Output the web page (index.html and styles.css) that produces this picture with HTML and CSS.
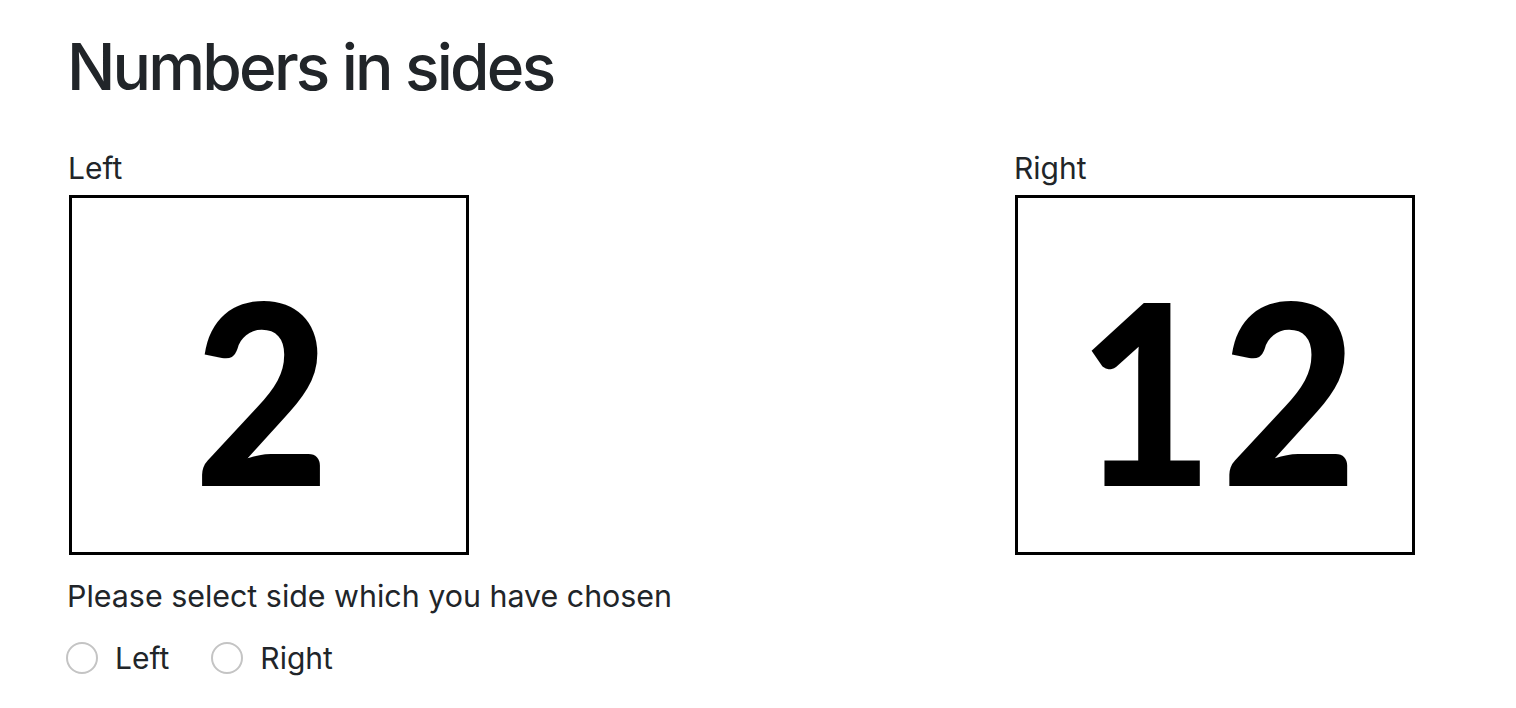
FILE: index.html
```html
<!DOCTYPE html>
<html>
<head>
<meta charset="utf-8">
<link rel="stylesheet" href="styles.css">
</head>
<body>
<main class="page">
  <h1 class="title">Numbers in sides</h1>
  <div class="sides">
    <div class="side">
      <div class="side-label">Left</div>
      <div class="card"><span class="num num-left">2</span></div>
    </div>
    <div class="side">
      <div class="side-label">Right</div>
      <div class="card"><span class="num num-right">12</span></div>
    </div>
  </div>
  <p class="prompt">Please select side which you have chosen</p>
  <div class="choices">
    <label class="choice"><input type="radio" name="side" class="radio"><span>Left</span></label>
    <label class="choice"><input type="radio" name="side" class="radio"><span>Right</span></label>
  </div>
</main>
</body>
</html>
```

FILE: styles.css
```css
html, body {
  margin: 0;
  padding: 0;
  background: #fff;
}
body {
  font-family: Inter, "Liberation Sans", sans-serif;
  color: #212529;
}
.page {
  padding: 29px 0 0 67px;
}
.title {
  margin: 0;
  font-size: 64px;
  font-weight: 500;
  line-height: 1.2;
  letter-spacing: -2.8px;
}
.sides {
  display: grid;
  grid-template-columns: 946px 402px;
  margin-top: 44px;
}
.side-label {
  font-size: 30px;
  line-height: 36px;
  padding-left: 1px;
}
.card {
  box-sizing: border-box;
  width: 400px;
  height: 360px;
  margin: 9px 0 0 2px;
  border: 3px solid #000;
  display: flex;
  align-items: center;
  justify-content: center;
  background: #fff;
}
.num {
  font-family: Lato, "Open Sans", sans-serif;
  font-weight: 900;
  font-size: 252px;
  line-height: 1;
  color: #000;
  transform: translateY(14px) scaleX(0.93);
}
.num-left { margin-left: -14px; }
.num-right { margin-left: 12px; letter-spacing: 8px; }
.prompt {
  margin: 23px 0 0;
  font-size: 30.4px;
  line-height: 36px;
}
.choices {
  display: flex;
  gap: 43px;
  margin-top: 26px;
}
.choice {
  display: flex;
  align-items: center;
  gap: 17px;
  font-size: 30px;
  line-height: 36px;
}
.radio {
  appearance: none;
  -webkit-appearance: none;
  margin: 0 0 0 -1px;
  width: 32px;
  height: 32px;
  border: 2px solid #c4c4c4;
  border-radius: 50%;
  background: #fff;
  box-sizing: border-box;
}
```
